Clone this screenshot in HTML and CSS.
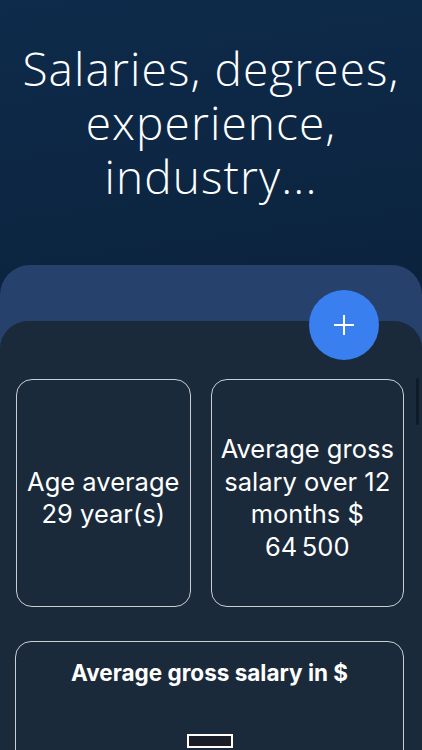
FILE: index.html
```html
<!DOCTYPE html>
<html lang="en">
<head>
<meta charset="utf-8">
<title>Salaries</title>
<link rel="stylesheet" href="styles.css">
</head>
<body>
<div class="screen">
  <header class="hero">
    <h1 class="hero-title"><span class="hero-line">Salaries, degrees,</span><span class="hero-line">experience,</span><span class="hero-line">industry...</span></h1>
  </header>
  <section class="sheet">
    <button class="fab" aria-label="Add">
      <svg width="24" height="24" viewBox="0 0 24 24"><path d="M12 2v20M2 12h20" stroke="#fff" stroke-width="2" fill="none"/></svg>
    </button>
    <div class="panel">
      <div class="scrollbar"></div>
      <div class="stats">
        <div class="stat stat-left">Age average<br>29 year(s)</div>
        <div class="stat stat-right">Average gross<br>salary over 12<br>months $<br>64&#8239;500</div>
      </div>
      <div class="chart-card">
        <h2 class="chart-title">Average gross salary in $</h2>
        <div class="legend-box"></div>
      </div>
    </div>
  </section>
</div>
</body>
</html>
```
FILE: styles.css
```css
html, body {
  margin: 0;
  padding: 0;
}
body {
  width: 422px;
  height: 750px;
  overflow: hidden;
  background: #0a1b2e;
}
.screen {
  width: 422px;
  height: 750px;
  overflow: hidden;
  background: linear-gradient(172deg, #0e2b4b 0%, #0a1f37 60%, #081a2c 100%);
  display: flex;
  flex-direction: column;
}
.hero {
  flex: 0 0 265px;
  box-sizing: border-box;
  padding-top: 41px;
}
.hero-title {
  margin: 0;
  font-family: "Open Sans", sans-serif;
  font-weight: 300;
  font-size: 46px;
  line-height: 54px;
  color: #ffffff;
  text-align: center;
  letter-spacing: 1.1px;
  display: flex;
  flex-direction: column;
  align-items: center;
}
.hero-line {
  display: block;
  height: 54px;
}
.sheet {
  position: relative;
  flex: 1 1 auto;
  min-height: 0;
  background: #26416b;
  border-radius: 30px 30px 0 0;
  padding-top: 56px;
  display: flex;
  flex-direction: column;
}
.fab {
  position: absolute;
  left: 309px;
  top: 25px;
  width: 70px;
  height: 70px;
  border-radius: 50%;
  border: none;
  background: #3a7ff0;
  display: flex;
  align-items: center;
  justify-content: center;
  padding: 0;
  z-index: 2;
}
.panel {
  position: relative;
  flex: 1 1 auto;
  min-height: 0;
  background: #1a2a3a;
  border-radius: 28px 28px 0 0;
  padding: 58px 18px 0 16px;
}
.scrollbar {
  position: absolute;
  right: 3px;
  top: 57px;
  width: 3px;
  height: 47px;
  border-radius: 2px;
  background: #0f1c28;
}
.stats {
  display: grid;
  grid-template-columns: 175fr 194fr;
  column-gap: 20px;
}
.stat {
  height: 228px;
  box-sizing: border-box;
  padding-top: 10px;
  border: 1.5px solid #c9ced4;
  border-radius: 16px;
  display: flex;
  align-items: center;
  justify-content: center;
  text-align: center;
  color: #ffffff;
  font-family: "Inter", "Liberation Sans", sans-serif;
  font-size: 25.5px;
  line-height: 32.5px;
}
.chart-card {
  margin-top: 34px;
  margin-left: -1px;
  height: 200px;
  box-sizing: border-box;
  border: 1.5px solid #c9ced4;
  border-radius: 16px;
  display: flex;
  flex-direction: column;
  align-items: center;
}
.chart-title {
  margin: 16px 0 0;
  font-family: "Inter", "Liberation Sans", sans-serif;
  font-weight: 700;
  font-size: 22.5px;
  line-height: 30px;
  color: #ffffff;
}
.legend-box {
  margin-top: 46px;
  width: 46px;
  height: 14px;
  box-sizing: border-box;
  border: 2px solid #ffffff;
  background: #1a1d26;
}
```
